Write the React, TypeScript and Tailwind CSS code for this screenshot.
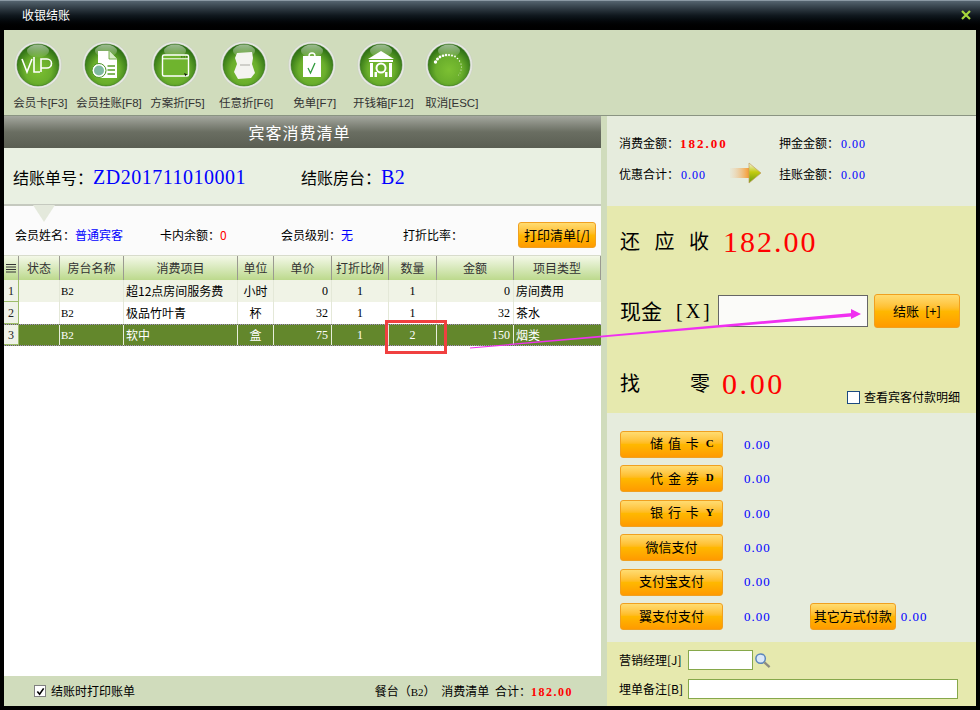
import React from 'react';

const cjk = '"Noto Sans CJK SC", sans-serif';

// green glossy round button, inner drawing is passed as children
function Orb({ children }: { children: React.ReactNode }) {
    return (
        <svg viewBox="0 0 48 48" className="w-12 h-12 mr-[5px]">
            <defs>
                <radialGradient id="orbFill" cx="50%" cy="62%" r="58%">
                    <stop offset="0%" stopColor="#7cc032" />
                    <stop offset="55%" stopColor="#6aae2c" />
                    <stop offset="100%" stopColor="#2c6e14" />
                </radialGradient>
                <linearGradient id="orbGloss" x1="0" y1="0" x2="0" y2="1">
                    <stop offset="0%" stopColor="#ffffff" stopOpacity="0.55" />
                    <stop offset="100%" stopColor="#ffffff" stopOpacity="0.05" />
                </linearGradient>
            </defs>
            <circle cx="24" cy="24" r="23.5" fill="#e6e8e2" stroke="#c8ccc0" strokeWidth="0.5" />
            <circle cx="24" cy="24" r="21" fill="url(#orbFill)" stroke="#2f6a16" strokeWidth="0.5" />
            <ellipse cx="24" cy="10" rx="11" ry="6.5" fill="url(#orbGloss)" />
            {children}
        </svg>
    );
}

const tools = [
    {
        label: '会员卡[F3]',
        icon: (
            <g fill="none" stroke="#fff" strokeWidth="1.6">
                <path d="M8 18l5 13 5-13" />
                <path d="M20 16v15h6" />
                <path d="M27 31V18h6a4.5 4.5 0 0 1 0 9h-6" />
            </g>
        ),
    },
    {
        label: '会员挂账[F8]',
        icon: (
            <g>
                <path d="M16 10h11l8 8v19H16z" fill="#fff" />
                <path d="M27 10v8h8" fill="#d8ecc8" stroke="#5aa028" strokeWidth="0.8" />
                <path d="M25.500 25h7.500M25.500 29h7.500M25.500 33h7.500" stroke="#5aa028" strokeWidth="1.300" />
                <circle cx="17" cy="29.500" r="7" fill="#fff" stroke="#4c9424" />
                <circle cx="17" cy="29.500" r="5" fill="#7fb9a0" />
            </g>
        ),
    },
    {
        label: '方案折[F5]',
        icon: (
            <g>
                <rect x="11.500" y="14" width="26" height="21" rx="1.500" fill="#6fb42e" stroke="#fff" strokeWidth="1.400" />
                <path d="M12 17.800h25" stroke="#fff" strokeWidth="1" />
                <path d="M30 15.900h1.500M32.500 15.900h1.500M35 15.900h1.500" stroke="#2c5a14" strokeWidth="1" />
                <path d="M33 32l3.500 1.500-1.500.5-.5 1.500z" fill="#111" />
            </g>
        ),
    },
    {
        label: '任意折[F6]',
        icon: (
            <g>
                <path d="M17 12l15-1 1 6-1 6 3 9-4 5-13 1-4-7 3-8-2-6z" fill="#f4f4f0" />
                <path d="M20 24h10" stroke="#cfcfca" strokeWidth="2" />
            </g>
        ),
    },
    {
        label: '免单[F7]',
        icon: (
            <g>
                <path d="M21 15a3 3 0 0 1 6 0" fill="none" stroke="#fff" strokeWidth="1.400" />
                <rect x="15" y="15" width="18" height="21" fill="#fff" />
                <path d="M20 27l2.500 5 4.500-10" fill="none" stroke="#2f9a3c" strokeWidth="1.300" />
            </g>
        ),
    },
    {
        label: '开钱箱[F12]',
        icon: (
            <g fill="#fff">
                <path d="M24 10l13 8H11z" />
                <rect x="12" y="19" width="24" height="2" />
                <rect x="13" y="22" width="3" height="14" />
                <rect x="32" y="22" width="3" height="14" />
                <rect x="17.500" y="31" width="2.500" height="5" />
                <rect x="28" y="31" width="2.500" height="5" />
                <circle cx="24" cy="27" r="5.500" />
                <circle cx="24" cy="27" r="3.500" fill="#6aae2c" />
            </g>
        ),
    },
    {
        label: '取消[ESC]',
        icon: (
            <g fill="#fff">
                <circle cx="10.500" cy="21" r="1.700" />
                <circle cx="12.500" cy="18" r="1.500" />
                <circle cx="15" cy="16" r="1.400" />
                <circle cx="18" cy="14.800" r="1.300" />
                <circle cx="21" cy="14" r="1.200" />
                <circle cx="24" cy="14" r="1.100" />
                <circle cx="27" cy="14.500" r="1" />
                <circle cx="30" cy="15.500" r="0.900" />
                <circle cx="32.500" cy="17.500" r="0.800" />
                <circle cx="34.500" cy="20" r="0.700" />
                <circle cx="36" cy="23" r="0.600" />
                <circle cx="36.500" cy="26" r="0.500" />
                <circle cx="36" cy="29" r="0.500" />
                <circle cx="35" cy="32" r="0.400" />
                <circle cx="33.500" cy="34" r="0.400" />
            </g>
        ),
    },
];

const rows = [
    { no: 1, room: 'B2', item: '超12点房间服务费', unit: '小时', price: 0, rate: 1, qty: 1, amount: 0, type: '房间费用' },
    { no: 2, room: 'B2', item: '极品竹叶青', unit: '杯', price: 32, rate: 1, qty: 1, amount: 32, type: '茶水' },
    { no: 3, room: 'B2', item: '软中', unit: '盒', price: 75, rate: 1, qty: 2, amount: 150, type: '烟类' },
];

const headers = ['状态', '房台名称', '消费项目', '单位', '单价', '打折比例', '数量', '金额', '项目类型'];

const gridCols = 'grid grid-cols-[15px_41px_64px_114px_36px_58px_57px_48px_77px_87px]';
const orangeBtn = 'flex items-center justify-center rounded-[3px] border border-[#f0a020] bg-gradient-to-b from-[#ffdc70] via-[#ffb800] to-[#ff9a00] text-black text-[13px]';
const serif = '"Liberation Serif", "Noto Sans CJK SC", serif';

const payButtons = [
    { label: '储 值 卡', key: 'C' },
    { label: '代 金 券', key: 'D' },
    { label: '银 行 卡', key: 'Y' },
    { label: '微信支付' },
    { label: '支付宝支付' },
    { label: '翼支付支付' },
];

function Money({ value, className }: { value: string; className: string }) {
    return (
        <span className={className} style={{ fontFamily: serif }}>
            {value}
        </span>
    );
}

export default function App() {
    return (
        <div className="relative w-[980px] h-[710px] bg-black overflow-hidden flex flex-col text-[12px] text-black" style={{ fontFamily: cjk }}>
            <div className="h-[30px] shrink-0 flex items-center justify-between pl-[22px] pr-[9px] pb-[1px] bg-gradient-to-b from-[#55646f] via-[#10181e] to-black border-t border-[#8b99a3] text-white">
                <span>收银结账</span>
                <svg viewBox="0 0 10 10" className="w-[10px] h-[10px]">
                    <path d="M1 1l8 8M9 1l-8 8" stroke="#a8d83c" strokeWidth="2.200" />
                </svg>
            </div>

            <div className="flex-1 flex flex-col mx-[4px] mb-[4px] min-h-0">
                <div className="h-[86px] shrink-0 flex items-start pl-[2px] pt-[11px] bg-[#d0dcbc] border-b border-[#8a9482]">
                    {tools.map((t) => (
                        <div key={t.label} className="w-[68.600px] shrink-0 flex flex-col items-center">
                            <Orb>{t.icon}</Orb>
                            <span className="mt-[5px] whitespace-nowrap text-[#333] text-[11.500px] leading-[18px]" style={{ fontFamily: '"Liberation Sans", "Noto Sans CJK SC", sans-serif' }}>
                                {t.label}
                            </span>
                        </div>
                    ))}
                </div>

                <div className="flex-1 flex min-h-0 bg-[#d0dcbc]">
                    <div className="w-[597px] shrink-0 flex flex-col">
                        <div className="h-[32px] shrink-0 flex items-center justify-center pr-[6px] text-white text-[16px] tracking-[1px] bg-gradient-to-b from-[#a5a89f] via-[#6a6e62] to-[#5a5e52]">
                            宾客消费清单
                        </div>
                        <div className="relative h-[58px] shrink-0 flex items-center pl-[9px] pt-[2px] bg-[#e9f0e2] border-b-2 border-[#c5c9bf] text-[16px]">
                            <span className="w-[288px] whitespace-nowrap">
                                结账单号：<span className="text-[#0000ff] text-[20px] tracking-[0.5px]" style={{ fontFamily: serif }}>ZD201711010001</span>
                            </span>
                            <span className="whitespace-nowrap">
                                结账房台：<span className="text-[#0000ff] text-[20px] tracking-[0.5px]" style={{ fontFamily: serif }}>B2</span>
                            </span>
                            <span className="absolute left-[29px] -bottom-[18px] w-0 h-0 border-l-[11px] border-r-[11px] border-t-[17px] border-l-transparent border-r-transparent border-t-[#e4e9dc]" />
                        </div>

                        <div className="flex-1 flex flex-col bg-white min-h-0">
                            <div className="h-[49px] shrink-0 flex items-center pl-[11px] pr-[5px] pt-[9px] bg-[#fbfbfb]">
                                <span className="w-[145px] whitespace-nowrap">会员姓名：<span className="text-[#0000ff]">普通宾客</span></span>
                                <span className="w-[121px] whitespace-nowrap">卡内余额：<span className="text-[#ff0000]">0</span></span>
                                <span className="w-[122px] whitespace-nowrap">会员级别：<span className="text-[#0000ff]">无</span></span>
                                <span className="whitespace-nowrap">打折比率：</span>
                                <button className={`${orangeBtn} ml-auto w-[78px] h-[26px]`}>打印清单[/]</button>
                            </div>

                            <div className={`${gridCols} h-[25px] shrink-0 bg-gradient-to-b from-[#f4f8e8] to-[#bcd98c] text-[#333] border-t border-[#d8dccc]`}>
                                <div className="flex items-center justify-center border-r border-[#9a9a90]">
                                    <svg viewBox="0 0 10 10" className="w-[10px] h-[10px]">
                                        <path d="M0 1.500h10M0 4h10M0 6.500h10M0 9h10" stroke="#333" strokeWidth="1" />
                                    </svg>
                                </div>
                                {headers.map((h) => (
                                    <div key={h} className="flex items-center justify-center whitespace-nowrap border-r border-[#9a9a90]">
                                        {h}
                                    </div>
                                ))}
                            </div>

                            {rows.map((r) => {
                                const selected = r.no === 3;
                                const bg = selected ? 'bg-[#63872c] text-white border-y border-dotted border-[#a58cc8]' : r.no === 1 ? 'bg-[#f0f3e6]' : 'bg-white';
                                const line = selected ? 'border-r border-[#e8eedc]' : 'border-r border-[#e4e8d8]';
                                return (
                                    <div key={r.no} className={`${gridCols} h-[22px] shrink-0 ${bg}`}>
                                        <div className="flex items-center justify-center bg-[#eff2e8] text-[#222] border-r border-b border-[#9dbd6a]" style={{ fontFamily: serif }}>{r.no}</div>
                                        <div className={line} />
                                        <div className={`${line} flex items-center pl-[1px] text-[11px]`} style={{ fontFamily: serif }}>{r.room}</div>
                                        <div className={`${line} flex items-center pl-[2px] whitespace-nowrap`}>{r.item}</div>
                                        <div className={`${line} flex items-center justify-center`}>{r.unit}</div>
                                        <div className={`${line} flex items-center justify-end pr-[3px]`} style={{ fontFamily: serif }}>{r.price}</div>
                                        <div className={`${line} flex items-center justify-center`} style={{ fontFamily: serif }}>{r.rate}</div>
                                        <div className={`${line} flex items-center justify-center`} style={{ fontFamily: serif }}>{r.qty}</div>
                                        <div className={`${line} flex items-center justify-end pr-[3px]`} style={{ fontFamily: serif }}>{r.amount}</div>
                                        <div className="flex items-center pl-[2px] whitespace-nowrap">{r.type}</div>
                                    </div>
                                );
                            })}
                        </div>

                        <div className="h-[30px] shrink-0 flex items-center pl-[30px] pr-[28px]">
                            <span className="w-[12px] h-[12px] flex items-center justify-center bg-white border border-[#808080]">
                                <svg viewBox="0 0 10 10" className="w-[9px] h-[9px]">
                                    <path d="M1.500 5l2.500 3 4.500-6.500" fill="none" stroke="#000" strokeWidth="1.800" />
                                </svg>
                            </span>
                            <span className="ml-[5px]">结账时打印账单</span>
                            <span className="ml-auto whitespace-nowrap [word-spacing:3px]">餐台（<span className="text-[11px]" style={{ fontFamily: serif }}>B2</span>） 消费清单 合计：<Money value="182.00" className="text-[#ff0000] font-bold tracking-[1.5px]" /></span>
                        </div>
                    </div>

                    <div className="ml-[6px] flex-1 flex flex-col">
                        <div className="h-[90px] shrink-0 grid grid-cols-[160px_1fr] content-center gap-y-[12px] pl-[12px] pb-[4px] bg-[#e6ecdd]">
                            <span className="whitespace-nowrap">消费金额：<Money value="182.00" className="ml-[1px] text-[#ff0000] font-bold text-[13px] tracking-[2px]" /></span>
                            <span className="whitespace-nowrap">押金金额：<Money value="0.00" className="ml-[2px] text-[#0000ff] tracking-[1px]" /></span>
                            <span className="relative whitespace-nowrap">
                                优惠合计：<Money value="0.00" className="ml-[2px] text-[#0000ff] tracking-[1px]" />
                                <svg viewBox="0 0 32 22" className="absolute left-[111px] top-[-3px] w-[32px] h-[22px]">
                                    <defs>
                                        <linearGradient id="goTail" x1="0" y1="0" x2="1" y2="0">
                                            <stop offset="0%" stopColor="#f0c8a0" stopOpacity="0.1" />
                                            <stop offset="100%" stopColor="#f59a30" />
                                        </linearGradient>
                                        <linearGradient id="goHead" x1="0" y1="0" x2="0" y2="1">
                                            <stop offset="0%" stopColor="#f4f4e0" />
                                            <stop offset="45%" stopColor="#c4cc10" />
                                            <stop offset="100%" stopColor="#6a9a10" />
                                        </linearGradient>
                                    </defs>
                                    <path d="M0 6h19v10H0z" fill="url(#goTail)" />
                                    <path d="M19 1l12 10-12 10z" fill="url(#goHead)" stroke="#c4a060" strokeWidth="0.7" />
                                </svg>
                            </span>
                            <span className="whitespace-nowrap">挂账金额：<Money value="0.00" className="ml-[2px] text-[#0000ff] tracking-[1px]" /></span>
                        </div>

                        <div className="h-[207px] shrink-0 flex flex-col pl-[13px] pt-[18px] bg-[#e6e9ae]">
                            <div className="flex items-center h-[34px]">
                                <span className="w-[103px] text-[20px] whitespace-nowrap [word-spacing:10px]">还 应 收</span>
                                <Money value="182.00" className="text-[#ff0000] text-[30px] tracking-[2px]" />
                            </div>
                            <div className="flex items-center h-[34px] mt-[36px]">
                                <span className="w-[98px] flex items-center text-[21px] whitespace-nowrap">
                                    现金
                                    <span className="ml-[14px] text-[20px] tracking-[3px]" style={{ fontFamily: serif }}>[X]</span>
                                </span>
                                <div className="w-[150px] h-[32px] bg-[#fbfbf9] border border-[#666]" />
                                <button className={`${orangeBtn} ml-[6px] w-[86px] h-[34px] [word-spacing:3px]`}>结账 [+]</button>
                            </div>
                            <div className="relative flex items-center h-[34px] mt-[38px]">
                                <span className="w-[102px] flex gap-[50px] text-[20px] whitespace-nowrap">
                                    <span>找</span>
                                    <span>零</span>
                                </span>
                                <Money value="0.00" className="text-[#ff0000] text-[30px] tracking-[2.600px]" />
                                <span className="absolute left-[227px] top-[22px] flex items-center gap-[4px] whitespace-nowrap text-[12px]">
                                    <span className="w-[13px] h-[13px] bg-white border border-[#1c4a80]" />
                                    查看宾客付款明细
                                </span>
                            </div>
                        </div>

                        <div className="h-[229px] shrink-0 flex flex-col gap-[7.400px] pl-[13px] pt-[18px] bg-[#e6ecdd]">
                            {payButtons.map((b, i) => (
                                <div key={b.label} className="flex items-center h-[27px]">
                                    {b.key ? (
                                        <button className={`${orangeBtn} !justify-start pl-[29px] pb-[3px] gap-[7px] w-[103px] h-[27px] whitespace-nowrap`}>
                                            <span className="[word-spacing:2px]">{b.label}</span>
                                            <span className="text-[11px] font-bold" style={{ fontFamily: serif }}>{b.key}</span>
                                        </button>
                                    ) : (
                                        <button className={`${orangeBtn} pb-[2px] w-[103px] h-[27px] whitespace-nowrap`}>{b.label}</button>
                                    )}
                                    <Money value="0.00" className="ml-[21px] text-[#0000ff] text-[13px] tracking-[1px]" />
                                    {i === 5 && (
                                        <>
                                            <button className={`${orangeBtn} ml-[39px] pb-[2px] w-[86px] h-[27px] whitespace-nowrap`}>其它方式付款</button>
                                            <Money value="0.00" className="ml-[5px] text-[#0000ff] text-[13px] tracking-[1px]" />
                                        </>
                                    )}
                                </div>
                            ))}
                        </div>

                        <div className="flex-1 flex flex-col gap-[9px] pl-[12px] pt-[8px] bg-[#e6e9ae]">
                            <div className="flex items-center h-[20px]">
                                <span className="w-[69px] whitespace-nowrap">营销经理[J]</span>
                                <div className="w-[65px] h-[20px] bg-white border border-[#86a84a]" />
                                <svg viewBox="0 0 18 18" className="ml-[1px] w-[17px] h-[17px]">
                                    <circle cx="7" cy="7" r="5" fill="#dbe8f8" stroke="#5c86bc" strokeWidth="1.600" />
                                    <path d="M11 11l5.500 5" stroke="#8c8c80" strokeWidth="2.400" />
                                </svg>
                            </div>
                            <div className="flex items-center h-[20px]">
                                <span className="w-[69px] whitespace-nowrap">埋单备注[B]</span>
                                <div className="w-[270px] h-[20px] bg-white border border-[#86a84a]" />
                            </div>
                        </div>
                    </div>
                </div>
            </div>

            {/* annotations drawn on top of the screenshot */}
            <div className="absolute left-[385px] top-[320px] w-[62px] h-[34px] border-[3px] border-[#f04040]" />
            <svg viewBox="0 0 980 710" className="absolute inset-0 w-[980px] h-[710px] pointer-events-none">
                <path d="M470 347.500L852 313L852 316.500L470 348.500z" fill="#f030f0" />
                <path d="M851 309l10 5-10 5z" fill="#f030f0" />
            </svg>
        </div>
    );
}
